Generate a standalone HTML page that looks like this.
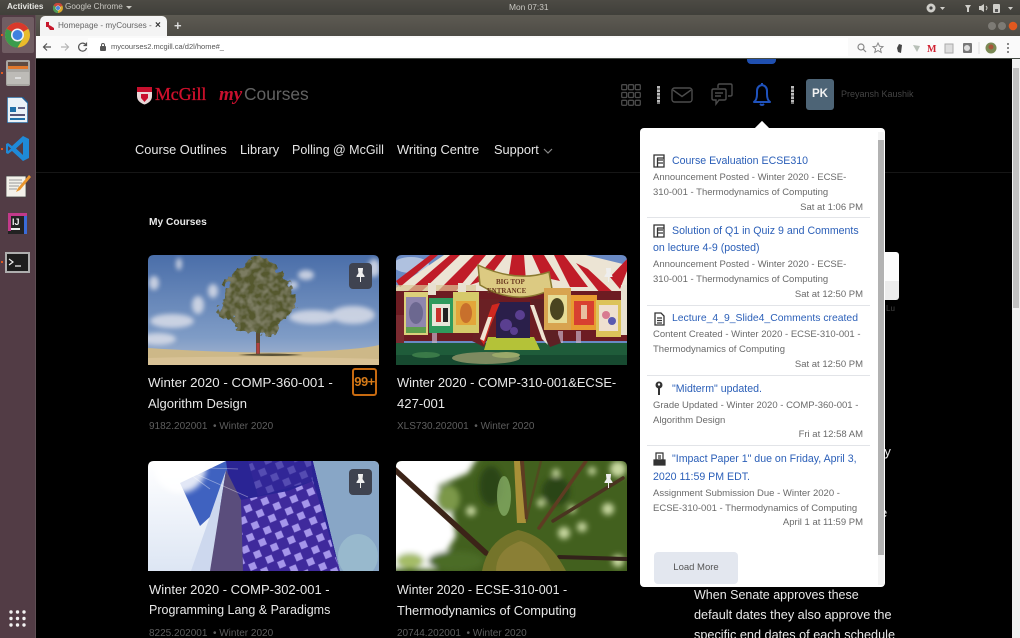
<!DOCTYPE html>
<html><head><meta charset="utf-8"><title>myCourses</title>
<style>
html,body{margin:0;padding:0;background:#000}
body{width:1020px;height:638px;overflow:hidden;position:relative;font-family:"Liberation Sans",sans-serif}
#w{position:absolute;left:0;top:0;width:1020px;height:638px;overflow:hidden;filter:blur(.35px)}
.a{position:absolute;white-space:nowrap}
svg{position:absolute;display:block}
.t{color:#e8e8e8;font-size:13.1px;left:148px}
.m{color:#5e5e5e;font-size:10px;left:149px}
.n{color:#e6e6e6;font-size:12.8px;top:142px}
.l{color:#2b5fb8;font-size:10.6px;left:653px}
.g{color:#6a6a6a;font-size:9.5px;left:653px}
.r{color:#6a6a6a;font-size:9.5px;right:157px}
.s{left:647px;width:223px;height:1px;background:#e2e4e8}
.b{color:#e8e8e8;font-size:12.7px;left:694px}
.pin{position:absolute;width:23px;height:26px;border-radius:4px;background:#3f4350}
</style></head><body><div id="w">

<!-- ubuntu top bar -->
<div class="a" style="left:0;top:0;width:1020px;height:15px;background:linear-gradient(#4c4a44,#403f3a)"></div>
<div class="a" style="left:7px;top:2px;font-size:8.2px;font-weight:bold;color:#e8e8e4">Activities</div>
<svg style="left:53px;top:3px" width="10" height="10" viewBox="0 0 20 20"><circle cx="10" cy="10" r="10" fill="#d9a92c"/><path d="M10 10L1 5A10 10 0 0 1 19 5Z" fill="#c8473a"/><path d="M10 10L1 5A10 10 0 0 0 10 20Z" fill="#4f9a55"/><circle cx="10" cy="10" r="4.5" fill="#4d85d8" stroke="#eee"/></svg>
<div class="a" style="left:65px;top:2px;font-size:8.2px;color:#c9c8c2">Google Chrome</div>
<div class="a" style="left:126px;top:6px;border:3px solid transparent;border-top:3px solid #c9c8c2"></div>
<div class="a" style="left:509px;top:2px;font-size:8.4px;color:#c9c8c2">Mon 07:31</div>
<svg style="left:925px;top:1px" width="95" height="14" viewBox="0 0 95 14" fill="#cfcec9"><circle cx="6" cy="7" r="4.5"/><circle cx="6" cy="7" r="1.6" fill="#444"/><path d="M15 6h5l-2.5 3z"/><path d="M40 4h6l-2 3v4h-2V7z"/><path d="M54 5h2l3-2v8l-3-2h-2z"/><path d="M61 5q2 2 0 4" fill="none" stroke="#cfcec9"/><rect x="68" y="3" width="7" height="9" rx="1"/><rect x="70" y="8" width="3" height="3" fill="#555"/><path d="M83 6h5l-2.5 3z"/></svg>

<!-- chrome tabstrip -->
<div class="a" style="left:36px;top:15px;width:984px;height:21px;background:linear-gradient(#5d5a52,#4d4b45)"></div>
<div class="a" style="left:40px;top:16px;width:127px;height:20px;background:#f4f4f4;border-radius:5px 5px 0 0"></div>
<svg style="left:46px;top:22px" width="9" height="8" viewBox="0 0 9 8"><path d="M0 0h3v3l2 1 3 2v2H4L2 5H0z" fill="#c8182c"/></svg>
<div class="a" style="left:58px;top:21px;font-size:8.2px;color:#666">Homepage - myCourses -</div>
<div class="a" style="left:155px;top:20px;font-size:10px;color:#333;font-weight:bold">×</div>
<div class="a" style="left:174px;top:18px;font-size:13px;color:#ddd;font-weight:bold">+</div>
<svg style="left:986px;top:20px" width="32" height="12" viewBox="0 0 32 12"><circle cx="6" cy="6" r="4" fill="#7d7b75"/><circle cx="16" cy="6" r="4" fill="#7d7b75"/><circle cx="27" cy="6" r="4.3" fill="#e2581f"/></svg>

<!-- toolbar -->
<div class="a" style="left:36px;top:36px;width:984px;height:22px;background:#fafafa"></div>
<div class="a" style="left:36px;top:58px;width:984px;height:1px;background:#454b45"></div>
<svg style="left:40px;top:40px" width="50" height="14" viewBox="0 0 50 14" fill="none" stroke="#555" stroke-width="1.2"><path d="M11 7H4M7 3.5L3.5 7 7 10.5"/><path d="M21 7h7M25 3.5L28.5 7 25 10.5" stroke="#b5b5b5"/><path d="M46 5a4 4 0 1 0 .5 3M46.500 2.500v3h-3"/></svg>
<div class="a" style="left:88px;top:38px;width:760px;height:18px;background:#fff"></div>
<svg style="left:100px;top:43px" width="6" height="8" viewBox="0 0 6 8"><rect y="3" width="6" height="5" rx="1" fill="#555"/><path d="M1.5 3V2a1.500 1.500 0 0 1 3 0v1" fill="none" stroke="#555"/></svg>
<div class="a" style="left:111px;top:42px;font-size:7.5px;color:#555">mycourses2.mcgill.ca/d2l/home#_</div>
<svg style="left:855px;top:41px" width="165" height="14" viewBox="0 0 165 14"><circle cx="6" cy="6" r="3" fill="none" stroke="#888" stroke-width="1.2"/><path d="M8 8l3 3" stroke="#888" stroke-width="1.2"/><path d="M23 2l1.5 3.2 3.5.4-2.600 2.300.8 3.500-3.200-1.800-3.200 1.800.8-3.500-2.600-2.300 3.500-.4z" fill="none" stroke="#888"/><path d="M44 3l3 1-1 8-3-1-1-4z" fill="#444"/><path d="M58 4l7 1-3 6z" fill="#b8c0b8"/><text x="72" y="11" font-family="Liberation Serif" font-weight="bold" font-size="10" fill="#d02030">M</text><rect x="90" y="3" width="8" height="9" fill="#ddd" stroke="#aaa"/><rect x="108" y="2" width="9" height="10" rx="1" fill="#777"/><circle cx="112" cy="7" r="3" fill="#ddd"/><path d="M124 1v12" stroke="#ddd"/><circle cx="136" cy="7" r="5.5" fill="#7a8a55"/><circle cx="136" cy="6" r="2.5" fill="#a8553a"/><circle cx="153" cy="3" r="1" fill="#666"/><circle cx="153" cy="7" r="1" fill="#666"/><circle cx="153" cy="11" r="1" fill="#666"/></svg>

<!-- launcher -->
<div class="a" style="left:0;top:15px;width:36px;height:623px;background:#523c45"></div>
<div class="a" style="left:35px;top:15px;width:1px;height:623px;background:#5f4e54"></div>
<div class="a" style="left:2px;top:17px;width:32px;height:36px;background:#705d63;border-radius:2px"></div>
<svg style="left:5px;top:22px" width="25" height="26" viewBox="0 0 24 24"><circle cx="12" cy="12" r="12" fill="#e9bb2b"/><path d="M12 12L1.6 6A12 12 0 0 1 22.4 6Z" fill="#d8392c"/><path d="M12 12L1.6 6A12 12 0 0 0 12 24L18 14Z" fill="#3a9c4c"/><circle cx="12" cy="12" r="5.5" fill="#3f80e0" stroke="#f2f2f2" stroke-width="1.5"/></svg>
<svg style="left:6px;top:60px" width="24" height="26" viewBox="0 0 24 26"><rect width="24" height="26" rx="2" fill="#a8a6a2"/><rect x="2" y="2" width="20" height="4" fill="#5e4a40"/><rect x="2" y="6" width="20" height="3" fill="#e0782c"/><rect x="1" y="12" width="22" height="12" fill="#bdbbb7"/><rect x="9" y="17" width="6" height="2" fill="#ddd"/></svg>
<svg style="left:7px;top:97px" width="21" height="26" viewBox="0 0 21 26"><path d="M0 0h15l6 6v20H0z" fill="#eaf1f7"/><path d="M0 0h15l6 6v20H0z" fill="none" stroke="#1f5f96" stroke-width="1.5"/><rect x="3" y="10" width="6" height="5" fill="#1f6fa8"/><rect x="11" y="10" width="7" height="2" fill="#668"/><rect x="3" y="17" width="15" height="2" fill="#557"/><rect x="3" y="21" width="15" height="2" fill="#1f6fa8"/></svg>
<svg style="left:6px;top:136px" width="24" height="25" viewBox="0 0 24 25"><path d="M17 0l6 3v19l-6 3L6 15l-4 3-2-1V8l2-1 4 3z" fill="#1f8ad8"/><path d="M17 6v13l-7-6.500z" fill="#523c45"/><path d="M2 10l3 2.500-3 2.500z" fill="#523c45"/></svg>
<svg style="left:6px;top:175px" width="25" height="23" viewBox="0 0 25 23"><rect y="1" width="20" height="21" fill="#f3f1ea" stroke="#444" stroke-width=".8"/><path d="M3 5h13M3 8h13M3 11h10M3 14h8" stroke="#999"/><path d="M23 0l2 2-11 13-4 2 2-4z" fill="#e8952e"/></svg>
<svg style="left:8px;top:213px" width="19" height="21" viewBox="0 0 19 21"><rect width="19" height="21" fill="#222"/><path d="M0 0h19v3H3v15H0z" fill="#c23a8a"/><path d="M19 3v18h-3V3z" fill="#3a6bd8"/><rect x="3" y="15" width="9" height="2" fill="#eee"/><text x="4" y="12" font-family="Liberation Sans" font-size="9" font-weight="bold" fill="#eee">IJ</text></svg>
<div class="a" style="left:5px;top:252px;width:25px;height:21px;box-sizing:border-box;background:#1d1d1d;border:2px solid #aeaeae"></div>
<svg style="left:8px;top:257px" width="18" height="12" viewBox="0 0 18 12" fill="none" stroke="#eee" stroke-width="1.2"><path d="M1 2l4 3-4 3M7 9h6"/></svg>
<svg style="left:9px;top:610px" width="18" height="18" viewBox="0 0 18 18" fill="#f2f2f2"><circle cx="2" cy="2" r="1.7"/><circle cx="8.5" cy="2" r="1.7"/><circle cx="15" cy="2" r="1.7"/><circle cx="2" cy="8.5" r="1.7"/><circle cx="8.5" cy="8.5" r="1.7"/><circle cx="15" cy="8.5" r="1.7"/><circle cx="2" cy="15" r="1.7"/><circle cx="8.5" cy="15" r="1.7"/><circle cx="15" cy="15" r="1.7"/></svg>
<div class="a" style="left:1px;top:34px;width:2px;height:2px;background:#e2581f"></div>
<div class="a" style="left:1px;top:72px;width:2px;height:2px;background:#e2581f"></div>
<div class="a" style="left:1px;top:148px;width:2px;height:2px;background:#e2581f"></div>
<div class="a" style="left:1px;top:261px;width:2px;height:2px;background:#e2581f"></div>

<!-- page scrollbar -->
<div class="a" style="left:1012px;top:59px;width:8px;height:579px;background:#f1f1f1"></div>
<div class="a" style="left:1013px;top:68px;width:6px;height:240px;background:#c1c1c1"></div>

<!-- logo -->
<svg style="left:137px;top:86px" width="15" height="19" viewBox="0 0 15 19"><path d="M0 1h15v9q0 6-7.5 8.500Q0 16 0 10z" fill="#e8d8d8"/><path d="M0 1h15v5H0z" fill="#c8102e"/><path d="M4 8h7v4l-3.500 4L4 12z" fill="#c8102e"/></svg>
<div class="a" style="left:155px;top:84px;font-family:'Liberation Serif',serif;font-size:17.8px;color:#d0102c;-webkit-text-stroke:.35px #d0102c">McGill</div>
<div class="a" style="left:219px;top:84px;font-family:'Liberation Serif',serif;font-style:italic;font-weight:bold;font-size:19px;color:#c8102e">my</div>
<div class="a" style="left:244px;top:84px;font-size:17.4px;color:#626262">Courses</div>

<!-- header icons -->
<svg style="left:621px;top:84px" width="20" height="22" viewBox="0 0 20 22" fill="none" stroke="#4a4a4a" stroke-width="1.3"><rect x=".7" y=".7" width="5" height="5" rx="1"/><rect x="7.5" y=".7" width="5" height="5" rx="1"/><rect x="14.3" y=".7" width="5" height="5" rx="1"/><rect x=".7" y="8.500" width="5" height="5" rx="1"/><rect x="7.5" y="8.500" width="5" height="5" rx="1"/><rect x="14.3" y="8.500" width="5" height="5" rx="1"/><rect x=".7" y="16.300" width="5" height="5" rx="1"/><rect x="7.5" y="16.300" width="5" height="5" rx="1"/><rect x="14.3" y="16.300" width="5" height="5" rx="1"/></svg>
<div class="a" style="left:657px;top:86px;width:3px;height:18px;background:repeating-linear-gradient(#bbb 0 2.5px,#333 2.5px 3.5px)"></div>
<svg style="left:671px;top:87px" width="22" height="16" viewBox="0 0 22 16" fill="none" stroke="#4c4c4c" stroke-width="1.4"><rect x="1" y="1" width="20" height="14" rx="2.5"/><path d="M2 3l9 6.500L20 3"/></svg>
<svg style="left:711px;top:83px" width="22" height="23" viewBox="0 0 22 23" fill="none" stroke="#4c4c4c" stroke-width="1.4"><path d="M7 5V2.500Q7 1 8.500 1h11Q21 1 21 2.500v9q0 1.500-1.500 1.500H17"/><path d="M2.500 6h11Q15 6 15 7.500v8q0 1.500-1.500 1.500H8l-3 4v-4H2.500Q1 17 1 15.500v-8Q1 6 2.500 6z"/><path d="M4 10h8M4 13h6"/></svg>
<div class="a" style="left:747px;top:59px;width:29px;height:5px;background:#1f4fb0;border-radius:0 0 4px 4px"></div>
<svg style="left:752px;top:82px" width="20" height="25" viewBox="0 0 20 25" fill="none" stroke="#1f52bc" stroke-width="2"><path d="M2 20q3-2 3-8V9q0-5 5-6 5 1 5 6v3q0 6 3 8z" stroke-linejoin="round"/><path d="M8 22q2 2 4 0"/><path d="M10 1v2"/></svg>
<div class="a" style="left:791px;top:86px;width:3px;height:18px;background:repeating-linear-gradient(#bbb 0 2.5px,#333 2.5px 3.5px)"></div>
<div class="a" style="left:806px;top:79px;width:28px;height:31px;background:#4d6476;border-radius:3px;color:#f2f2f2;font-size:11.5px;font-weight:bold;line-height:31px;text-align:center">PK</div>
<div class="a" style="left:841px;top:89px;font-size:9px;color:#454545">Preyansh Kaushik</div>

<!-- nav -->
<div class="a n" style="left:135px">Course Outlines</div>
<div class="a n" style="left:240px">Library</div>
<div class="a n" style="left:292px;font-size:12.5px;top:143px">Polling @ McGill</div>
<div class="a n" style="left:397px;font-size:12.9px">Writing Centre</div>
<div class="a n" style="left:494px">Support</div>
<svg style="left:543px;top:148px" width="10" height="6" viewBox="0 0 10 6" fill="none" stroke="#888" stroke-width="1.2"><path d="M1 1l4 4 4-4"/></svg>
<div class="a" style="left:36px;top:172px;width:976px;height:1px;background:#161616"></div>
<div class="a" style="left:149px;top:217px;font-size:10.2px;font-weight:bold;color:#e8e8e8">My Courses</div>

<!-- card 1 -->
<svg style="left:148px;top:255px" width="231" height="110" viewBox="0 0 231 110">
<defs>
<clipPath id="c"><path d="M6 0H225Q231 0 231 6V110H0V6Q0 0 6 0Z"/></clipPath>
<linearGradient id="sky" x1="0" y1="0" x2="0" y2="1"><stop offset="0" stop-color="#4a6ea9"/><stop offset=".75" stop-color="#7f9cc6"/><stop offset="1" stop-color="#a9b7cf"/></linearGradient>
<filter id="b1"><feGaussianBlur stdDeviation="3"/></filter>
<filter id="b15"><feGaussianBlur stdDeviation="2.4"/></filter>
<filter id="leaf" x="-15%" y="-15%" width="130%" height="130%"><feTurbulence type="fractalNoise" baseFrequency=".14" numOctaves="2" seed="4" result="n"/><feDisplacementMap in="SourceGraphic" in2="n" scale="14" xChannelSelector="R" yChannelSelector="G" result="d"/><feColorMatrix in="n" type="matrix" values="0 0 0 0 .2  0 0 0 0 .2  0 0 0 0 .12  0 0 0 3 -1.1" result="dk"/><feComposite in="dk" in2="d" operator="in" result="dd"/><feMerge><feMergeNode in="d"/><feMergeNode in="dd"/></feMerge></filter>
<pattern id="lz" width="13" height="13" patternUnits="userSpaceOnUse" patternTransform="rotate(22)"><rect width="13" height="13" fill="#3f2a9c"/><path d="M6.5 1.500L11.500 6.500 6.500 11.500 1.500 6.500z" fill="#a596ea"/></pattern>
</defs>
<g clip-path="url(#c)">
<rect width="231" height="110" fill="url(#sky)"/>
<g fill="#d9dde8" filter="url(#b15)" opacity=".85"><ellipse cx="24" cy="66" rx="22" ry="7"/><ellipse cx="10" cy="84" rx="18" ry="6"/><ellipse cx="50" cy="50" rx="6" ry="9"/><ellipse cx="158" cy="20" rx="8" ry="5"/><ellipse cx="165" cy="62" rx="24" ry="7"/><ellipse cx="205" cy="60" rx="22" ry="9"/><ellipse cx="31" cy="9" rx="3" ry="6"/><ellipse cx="65" cy="36" rx="5" ry="7"/><ellipse cx="6" cy="28" rx="5" ry="7"/><ellipse cx="226" cy="13" rx="6" ry="9"/><ellipse cx="145" cy="30" rx="5" ry="4"/></g>
<path d="M0 93Q90 99 150 97T231 90V110H0Z" fill="#cdb888"/>
<path d="M0 103Q90 100 231 104V110H0Z" fill="#d8c296"/>
<rect x="108" y="78" width="4" height="22" fill="#5e4a34"/><rect x="108.500" y="88" width="3" height="11" fill="#b04040"/>
<g fill="#55582f" filter="url(#leaf)"><ellipse cx="110" cy="42" rx="34" ry="34"/><ellipse cx="110" cy="18" rx="20" ry="14"/><ellipse cx="84" cy="54" rx="14" ry="10"/><ellipse cx="136" cy="48" rx="12" ry="12"/><ellipse cx="122" cy="74" rx="10" ry="7"/><ellipse cx="98" cy="72" rx="8" ry="6"/></g>
<path d="M90 100q30-3 65 0-30 2-65 0z" fill="#5a5238"/>
</g></svg>
<div class="pin" style="left:349px;top:263px"></div>
<svg style="left:355px;top:267px" width="11" height="16" viewBox="0 0 11 16" fill="#eee"><path d="M3 1h5v1L7.5 6l2 3v1h-8V9l2-3L3 2z"/><path d="M5 10h1v5H5z"/></svg>
<div class="a t" style="top:375px;font-size:13.3px">Winter 2020 - COMP-360-001 -</div>
<div class="a t" style="top:396px;font-size:13px">Algorithm Design</div>
<div class="a m" style="top:421px">9182.202001 &nbsp;• Winter 2020</div>
<div class="a" style="left:352px;top:368px;width:25px;height:28px;border:2px solid #c76a10;border-radius:3px;box-sizing:border-box;color:#d57a18;font-size:13px;font-weight:bold;line-height:24px;text-align:center;letter-spacing:-.5px">99+</div>

<!-- card 2 circus -->
<svg style="left:396px;top:255px" width="231" height="110" viewBox="0 0 231 110">
<defs><clipPath id="c2"><path d="M6 0H225Q231 0 231 6V110H0V6Q0 0 6 0Z"/></clipPath></defs>
<g clip-path="url(#c2)">
<rect width="231" height="110" fill="#6a8ac4"/>
<ellipse cx="15" cy="10" rx="18" ry="8" fill="#dde6f2" opacity=".6"/>
<path d="M0 33L48 0H190L231 10V60H0Z" fill="#ece4d4"/>
<g fill="#c01c28"><path d="M0 26L34 0H42L4 32z"/><path d="M12 36L54 0H64L26 36z"/><path d="M40 38L78 0H90L60 36z"/><path d="M74 30L100 0H110L92 24z"/><path d="M112 26L116 0H128L130 26z"/><path d="M146 22L136 0H148L164 26z"/><path d="M174 32L158 0H168L192 32z"/><path d="M204 38L180 8 192 14 220 40z"/><path d="M214 22L231 4V16L224 34z"/></g>
<path d="M0 30H80V38H0Z" fill="#d8c896" opacity=".7"/>
<rect y="36" width="231" height="50" fill="#6d1c22"/>
<g fill="#e8e0d0"><rect x="32" y="28" width="8" height="12"/><rect x="62" y="28" width="8" height="10"/><rect x="225" y="30" width="6" height="50"/></g>
<g fill="#7a2a30"><rect x="0" y="60" width="8" height="28"/></g>
<g fill="#c8b0c8" opacity=".7"><rect x="36" y="78" width="5" height="12"/><rect x="162" y="76" width="5" height="12"/><rect x="180" y="76" width="5" height="12"/></g>
<rect x="0" y="88" width="231" height="22" fill="#1f5c3a"/>
<path d="M0 100H231V110H0Z" fill="#174a30"/>
<path d="M92 82H138L144 95H88Z" fill="#b4c238"/>
<ellipse cx="90" cy="103" rx="34" ry="6" fill="#7d8a60"/><ellipse cx="110" cy="100" rx="14" ry="3" fill="#9aa86a"/><ellipse cx="30" cy="100" rx="14" ry="3" fill="#3a7a48"/>
<rect x="100" y="47" width="34" height="36" fill="#2a1f4a"/>
<g fill="#5a3f90"><circle cx="110" cy="70" r="6"/><circle cx="124" cy="60" r="5"/><circle cx="118" cy="76" r="4"/></g>
<path d="M84 44H104L96 70 88 92 76 86Z" fill="#6a2024"/><path d="M96 50L104 48 94 72 88 90 84 84Z" fill="#d0281f"/><path d="M92 62L96 62 88 86 84 84Z" fill="#efe3d2"/>
<path d="M134 44H150L165 88 154 92 144 74Z" fill="#5e2024"/><path d="M134 50L138 50 152 90 146 84Z" fill="#efe3d2"/>
<path d="M82 10Q120 28 153 17L156 34Q120 52 84 30Z" fill="#dcca82" stroke="#8a7a30" stroke-width="1.500"/>
<text x="100" y="29" font-family="Liberation Serif" font-weight="bold" font-size="7" fill="#6a3a20">BIG TOP</text><text x="91" y="38" font-family="Liberation Serif" font-weight="bold" font-size="7" fill="#6a3a20">ENTRANCE</text>
<g>
<rect x="8" y="37" width="24" height="43" fill="#dcd07a"/><rect x="10" y="42" width="20" height="30" fill="#8f86ae"/><ellipse cx="20" cy="58" rx="7" ry="11" fill="#6c6890"/><rect x="10" y="72" width="20" height="6" fill="#5e9e4e"/>
<rect x="33" y="43" width="24" height="35" fill="#2f9a5c"/><rect x="36" y="49" width="18" height="22" fill="#e6e6d8"/><rect x="40" y="53" width="5" height="14" fill="#c8322c"/><rect x="47" y="53" width="5" height="14" fill="#222"/>
<rect x="57" y="37" width="26" height="41" fill="#d6ca6a"/><rect x="60" y="46" width="20" height="24" fill="#e3a63a"/><ellipse cx="70" cy="58" rx="6" ry="10" fill="#c8702c"/>
<rect x="148" y="33" width="27" height="42" fill="#d8a450"/><rect x="152" y="40" width="19" height="28" fill="#e6dc96"/><ellipse cx="161" cy="54" rx="7" ry="11" fill="#4a4420"/>
<rect x="175" y="40" width="26" height="35" fill="#e89c30"/><rect x="178" y="46" width="20" height="24" fill="#d84030"/><rect x="185" y="50" width="6" height="14" fill="#e8c0a0"/>
<rect x="200" y="45" width="25" height="37" fill="#dcc35a"/><rect x="203" y="50" width="19" height="26" fill="#eee0d0"/><circle cx="210" cy="60" r="4" fill="#d87a90"/><circle cx="216" cy="66" r="4" fill="#5a5ab0"/>
</g>
</g></svg>
<svg style="left:603px;top:267px" width="11" height="16" viewBox="0 0 11 16" fill="#eee"><path d="M3 1h5v1L7.5 6l2 3v1h-8V9l2-3L3 2z"/><path d="M5 10h1v5H5z"/></svg>
<div class="a t" style="top:375px;left:397px;font-size:12.9px">Winter 2020 - COMP-310-001&amp;ECSE-</div>
<div class="a t" style="top:396px;left:397px">427-001</div>
<div class="a m" style="top:421px;left:397px">XLS730.202001 &nbsp;• Winter 2020</div>

<!-- card 3 building -->
<svg style="left:148px;top:461px" width="231" height="110" viewBox="0 0 231 110">
<defs><clipPath id="c3"><path d="M6 0H225Q231 0 231 6V110H0V6Q0 0 6 0Z"/></clipPath>
<linearGradient id="g3" x1="0" y1="0" x2="0" y2="1"><stop offset="0" stop-color="#fff"/><stop offset="1" stop-color="#dde6f4"/></linearGradient></defs>
<g clip-path="url(#c3)">
<rect width="231" height="110" fill="url(#g3)"/>
<path d="M32 22L78 0 90 30 52 65z" fill="#3f62c0"/>
<path d="M78 0H165L192 110H93z" fill="#2a2494"/>
<path d="M93 39L140 30 165 20 192 110H95z" fill="url(#lz)"/>
<path d="M100 0H163L165 20 110 35z" fill="url(#lz)" opacity=".35"/>
<path d="M165 0H231V110H192z" fill="#88a6c6"/>
<ellipse cx="210" cy="95" rx="20" ry="22" fill="#a4c6d2" opacity=".6"/>
<path d="M78 9L43 110H62z" fill="#cdd8ee"/>
<path d="M78 9L62 110H95L93 39z" fill="#5a4d7c"/>
<circle cx="32" cy="6" r="26" fill="#fff" opacity=".85" filter="url(#b1)"/>
<path d="M32 6L100 36M32 6L62 28M32 6L90 8" stroke="#fff" stroke-width=".8" opacity=".4"/>
</g></svg>
<div class="pin" style="left:349px;top:469px"></div>
<svg style="left:355px;top:473px" width="11" height="16" viewBox="0 0 11 16" fill="#eee"><path d="M3 1h5v1L7.5 6l2 3v1h-8V9l2-3L3 2z"/><path d="M5 10h1v5H5z"/></svg>
<div class="a t" style="top:582px;left:149px;font-size:13px">Winter 2020 - COMP-302-001 -</div>
<div class="a t" style="top:603px;left:149px;font-size:12.5px">Programming Lang &amp; Paradigms</div>
<div class="a m" style="top:628px">8225.202001 &nbsp;• Winter 2020</div>

<!-- card 4 tree -->
<svg style="left:396px;top:461px" width="231" height="110" viewBox="0 0 231 110">
<defs><clipPath id="c4"><path d="M6 0H225Q231 0 231 6V110H0V6Q0 0 6 0Z"/></clipPath></defs>
<g clip-path="url(#c4)">
<rect width="231" height="110" fill="#42601e"/>
<g filter="url(#b1)">
<path d="M-8-8H84L72 12 42 25 56 50 60 75 40 108H-8Z" fill="#fff"/>
<ellipse cx="14" cy="100" rx="14" ry="8" fill="#a4bc66"/>
<ellipse cx="60" cy="100" rx="28" ry="10" fill="#4c6c26"/>
<ellipse cx="52" cy="38" rx="12" ry="14" fill="#7c9848"/>
<g fill="#c8d8a0"><circle cx="168" cy="72" r="6"/><circle cx="186" cy="66" r="5"/><circle cx="212" cy="48" r="6"/><circle cx="222" cy="8" r="8"/><circle cx="145" cy="42" r="4"/><circle cx="176" cy="48" r="4"/><circle cx="222" cy="100" r="6"/><circle cx="196" cy="10" r="4"/><circle cx="75" cy="50" r="5"/><circle cx="160" cy="12" r="4"/></g>
<g fill="#2a4416"><ellipse cx="160" cy="30" rx="14" ry="14"/><ellipse cx="95" cy="25" rx="12" ry="20"/></g></g>
<g fill="none" stroke-linecap="round"><path d="M-2 8L90 92" stroke-width="5.500" stroke="#3c2418"/><path d="M190 0L143 67" stroke-width="3.500" stroke="#5e3c22"/><path d="M227 17L157 60" stroke-width="3.500" stroke="#4a3420"/><path d="M163 96L231 98" stroke-width="4" stroke="#33221a"/><path d="M145 0L130 60" stroke-width="2.500" stroke="#5e3c22" opacity=".6"/></g>
<path d="M118 0h6l6 62h-9z" fill="#a89038"/><path d="M124 0h4l4 58h-3z" fill="#5e3c22"/>
<path d="M86 110Q92 78 122 69q30 6 48 41z" fill="#74742a"/>
<path d="M100 110Q100 88 125 80q20 6 30 30z" fill="#8a7f35"/>
<ellipse cx="108" cy="35" rx="7" ry="20" fill="#8ab06a" opacity=".75"/>
</g></svg>
<svg style="left:603px;top:473px" width="11" height="16" viewBox="0 0 11 16" fill="#eee"><path d="M3 1h5v1L7.5 6l2 3v1h-8V9l2-3L3 2z"/><path d="M5 10h1v5H5z"/></svg>
<div class="a t" style="top:583px;left:397px;font-size:12.5px">Winter 2020 - ECSE-310-001 -</div>
<div class="a t" style="top:603px;left:397px;font-size:12.9px">Thermodynamics of Computing</div>
<div class="a m" style="top:628px;left:397px">20744.202001 &nbsp;• Winter 2020</div>

<!-- right col behind panel -->
<div class="a" style="left:880px;top:252px;width:19px;height:48px;background:linear-gradient(#fcfcfc 0 60%,#ececec 60%);border-radius:0 3px 3px 0"></div>
<div class="a" style="left:886px;top:304px;font-size:8px;color:#444">Lu</div>
<div class="a" style="left:880px;top:444px;font-size:13px;color:#e8e8e8">ry</div>
<div class="a" style="left:880px;top:505px;font-size:13px;color:#e8e8e8">e</div>
<div class="a b" style="top:588px;font-size:12.5px">When Senate approves these</div>
<div class="a b" style="top:608px">default dates they also approve the</div>
<div class="a b" style="top:628px">specific end dates of each schedule</div>

<!-- notification panel -->
<div class="a" style="left:640px;top:128px;width:245px;height:459px;background:#fff;border-radius:4px"></div>
<div class="a" style="left:757px;top:123px;width:10px;height:10px;background:#fff;transform:rotate(45deg)"></div>
<div class="a" style="left:878px;top:132px;width:6px;height:453px;background:#f4f4f4"></div>
<div class="a" style="left:878px;top:140px;width:6px;height:415px;background:#b2b2b2"></div>

<svg style="left:653px;top:154px" width="12" height="14" viewBox="0 0 12 14" fill="none" stroke="#333" stroke-width="1.3"><path d="M1 1h10v12H1z"/><path d="M5 6h5M5 9h5M4 4h7M4.5 4v9"/></svg>
<div class="a l" style="left:672px;top:155px">Course Evaluation ECSE310</div>
<div class="a g" style="top:172px">Announcement Posted - Winter 2020 - ECSE-</div>
<div class="a g" style="top:187px">310-001 - Thermodynamics of Computing</div>
<div class="a r" style="top:202px">Sat at 1:06 PM</div>
<div class="a s" style="top:217px"></div>

<svg style="left:653px;top:224px" width="12" height="14" viewBox="0 0 12 14" fill="none" stroke="#333" stroke-width="1.3"><path d="M1 1h10v12H1z"/><path d="M5 6h5M5 9h5M4 4h7M4.5 4v9"/></svg>
<div class="a l" style="left:672px;top:225px">Solution of Q1 in Quiz 9 and Comments</div>
<div class="a l" style="top:242px">on lecture 4-9 (posted)</div>
<div class="a g" style="top:259px">Announcement Posted - Winter 2020 - ECSE-</div>
<div class="a g" style="top:274px">310-001 - Thermodynamics of Computing</div>
<div class="a r" style="top:289px">Sat at 12:50 PM</div>
<div class="a s" style="top:305px"></div>

<svg style="left:654px;top:312px" width="11" height="14" viewBox="0 0 11 14" fill="none" stroke="#333" stroke-width="1.3"><path d="M1 1h6l3 3v9H1z"/><path d="M3 6h5M3 8.500h5M3 11h5"/></svg>
<div class="a l" style="left:672px;top:313px;font-size:10.4px">Lecture_4_9_Slide4_Comments created</div>
<div class="a g" style="top:329px">Content Created - Winter 2020 - ECSE-310-001 -</div>
<div class="a g" style="top:344px">Thermodynamics of Computing</div>
<div class="a r" style="top:359px">Sat at 12:50 PM</div>
<div class="a s" style="top:375px"></div>

<svg style="left:655px;top:381px" width="8" height="14" viewBox="0 0 8 14" fill="#333"><circle cx="4" cy="4" r="3.5"/><circle cx="4" cy="3.500" r="1.2" fill="#fff"/><path d="M3 7h2v7H3z"/></svg>
<div class="a l" style="left:672px;top:383px">"Midterm" updated.</div>
<div class="a g" style="top:400px">Grade Updated - Winter 2020 - COMP-360-001 -</div>
<div class="a g" style="top:415px">Algorithm Design</div>
<div class="a r" style="top:429px">Fri at 12:58 AM</div>
<div class="a s" style="top:445px"></div>

<svg style="left:653px;top:452px" width="13" height="14" viewBox="0 0 13 14" fill="none" stroke="#333" stroke-width="1.2"><path d="M3 1h7v7H3z"/><path d="M1 8h11v5H1z" fill="#333"/><path d="M5 4h3M5 6h3"/></svg>
<div class="a l" style="left:672px;top:453px">"Impact Paper 1" due on Friday, April 3,</div>
<div class="a l" style="top:471px">2020 11:59 PM EDT.</div>
<div class="a g" style="top:488px">Assignment Submission Due - Winter 2020 -</div>
<div class="a g" style="top:503px">ECSE-310-001 - Thermodynamics of Computing</div>
<div class="a r" style="top:517px">April 1 at 11:59 PM</div>

<div class="a" style="left:654px;top:552px;width:84px;height:32px;background:#e3e7ef;border-radius:4px;color:#555;font-size:9.5px;line-height:31px;text-align:center">Load More</div>

</div></body></html>
